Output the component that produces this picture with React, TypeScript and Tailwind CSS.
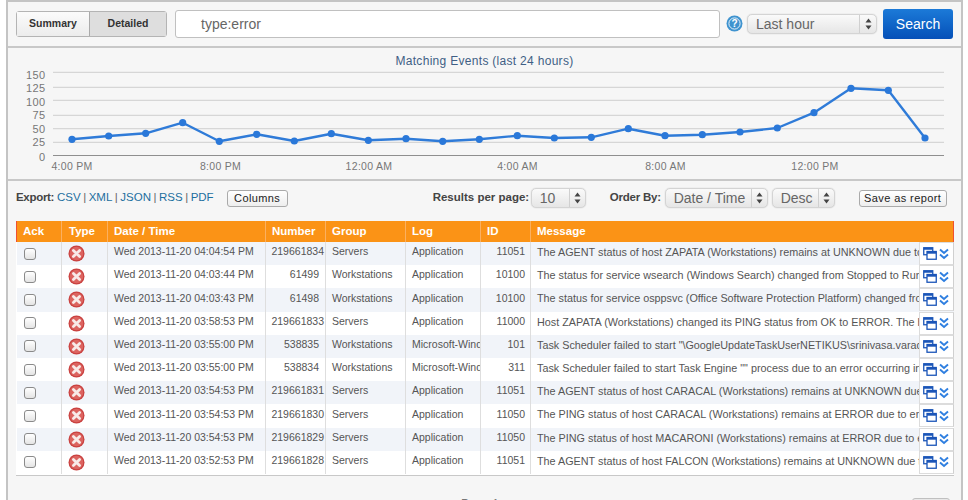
const font = { fontFamily: '"Liberation Sans", Arial, sans-serif' };

const pts: [number, number][] = [
  [72, 139.3], [108.7, 136], [145.7, 133.3], [182.7, 122.7], [219.3, 141.3], [256.7, 134.3],
  [294.3, 141], [331.3, 133.7], [368.3, 140.3], [406, 138.7], [442.7, 141.3], [479.3, 139.3],
  [517.3, 135.7], [554.3, 138], [591.3, 137.3], [628.3, 128.7], [665, 135.7], [702.3, 134.7],
  [740, 132], [777.3, 128], [814, 112.7], [851, 88.3], [888.3, 90.3], [925, 138],
];

const rows = [
  ["Wed 2013-11-20 04:04:54 PM", "219661834", "Servers", "Application", "11051", "The AGENT status of host ZAPATA (Workstations) remains at UNKNOWN due to timeout while waiting"],
  ["Wed 2013-11-20 04:03:44 PM", "61499", "Workstations", "Application", "10100", "The status for service wsearch (Windows Search) changed from Stopped to Running on this host"],
  ["Wed 2013-11-20 04:03:43 PM", "61498", "Workstations", "Application", "10100", "The status for service osppsvc (Office Software Protection Platform) changed from Stopped to Running"],
  ["Wed 2013-11-20 03:58:53 PM", "219661833", "Servers", "Application", "11000", "Host ZAPATA (Workstations) changed its PING status from OK to ERROR. The host did not respond"],
  ["Wed 2013-11-20 03:55:00 PM", "538835", "Workstations", "Microsoft-Windows-TaskScheduler", "101", "Task Scheduler failed to start \"\\GoogleUpdateTaskUserNETIKUS\\srinivasa.varada\" task for user"],
  ["Wed 2013-11-20 03:55:00 PM", "538834", "Workstations", "Microsoft-Windows-TaskScheduler", "311", "Task Scheduler failed to start Task Engine \"\" process due to an error occurring in the service"],
  ["Wed 2013-11-20 03:54:53 PM", "219661831", "Servers", "Application", "11051", "The AGENT status of host CARACAL (Workstations) remains at UNKNOWN due to timeout while waiting"],
  ["Wed 2013-11-20 03:54:53 PM", "219661830", "Servers", "Application", "11050", "The PING status of host CARACAL (Workstations) remains at ERROR due to error while waiting"],
  ["Wed 2013-11-20 03:54:53 PM", "219661829", "Servers", "Application", "11050", "The PING status of host MACARONI (Workstations) remains at ERROR due to error while waiting"],
  ["Wed 2013-11-20 03:52:53 PM", "219661828", "Servers", "Application", "11051", "The AGENT status of host FALCON (Workstations) remains at UNKNOWN due to timeout while waiting"],
];

function Arrows() {
  return (
    <svg width="7" height="12" viewBox="0 0 7 12" className="block">
      <path d="M3.5 0.5 L6.5 4.5 H0.5 Z M3.5 11.5 L0.5 7.5 H6.5 Z" fill="#444" />
    </svg>
  );
}

function Select({ label, w, textW }: { label: string; w: string; textW: string }) {
  return (
    <div className={`${w} h-[20px] flex items-center rounded-[5px] border border-[#d4d4d4] bg-gradient-to-b from-[#fafafa] to-[#e6e6e6] shadow-[0_0_1px_#bbb]`}>
      <div className={`${textW} text-[14px] text-[#666] pl-[8px] leading-none whitespace-nowrap`}>{label}</div>
      <div className="flex-1 self-stretch border-l border-[#d0d0d0] flex items-center justify-center">
        <Arrows />
      </div>
    </div>
  );
}

function ErrorIcon() {
  return (
    <svg width="17" height="17" viewBox="0 0 17 17" className="block">
      <circle cx="8.5" cy="8.5" r="8" fill="#c9403f" />
      <circle cx="8.5" cy="8.5" r="6.8" fill="#dc6460" />
      <path d="M5.4 5.4 L11.6 11.6 M11.6 5.4 L5.4 11.6" stroke="#f8eae8" strokeWidth="2.8" strokeLinecap="round" />
    </svg>
  );
}

function Actions() {
  return (
    <div className="absolute right-0 top-0 w-[35px] h-[23px] bg-white border border-[#dcdcdc] border-r-[#d0d0d0] flex items-center justify-center gap-[2px]">
      <svg width="14" height="13" viewBox="0 0 14 13" className="block">
        <rect x="0.75" y="0.75" width="9" height="7" fill="#fff" stroke="#1a55b8" strokeWidth="1.3" />
        <rect x="0.75" y="0.75" width="9" height="2" fill="#1a55b8" />
        <rect x="4" y="4.5" width="9.25" height="7.75" fill="#fff" stroke="#1a55b8" strokeWidth="1.3" />
        <rect x="4" y="4.5" width="9.25" height="2.2" fill="#1a55b8" />
      </svg>
      <svg width="10" height="12" viewBox="0 0 10 12" className="block">
        <path d="M1 1.5 L5 5 L9 1.5 M1 6.5 L5 10 L9 6.5" fill="none" stroke="#2f7fe0" strokeWidth="1.9" />
      </svg>
    </div>
  );
}

export default function App() {
  return (
    <div style={font} className="w-[968px] h-[500px] overflow-hidden bg-white relative">
      <div className="ml-[6px] w-[957px] h-[520px] border-2 border-[#c4c4c4] border-b-0 bg-[#f6f6f6]">
        {/* toolbar */}
        <div className="h-[46px] flex items-start border-b-2 border-[#c8c8c8]">
          <div className="ml-[8px] mt-[9px] flex w-[151px] h-[26px] rounded-[3px] border border-[#b4b4b4] text-[10.5px] font-bold text-[#333]">
            <div className="w-[73px] flex items-center justify-center bg-gradient-to-b from-[#fbfbfb] to-[#ececec] border-r border-[#aaa]">Summary</div>
            <div className="flex-1 flex items-center justify-center bg-[#dedede]">Detailed</div>
          </div>
          <div className="ml-[8px] mt-[8px] w-[545px] h-[28px] bg-white border border-[#c0c0c0] rounded-[3px] pl-[25px] flex items-center text-[14px] text-[#666]">
            type:error
          </div>
          <div className="ml-[6px] mt-[13px]">
            <svg width="17" height="17" viewBox="0 0 17 17" className="block">
              <circle cx="8.5" cy="8.5" r="8" fill="#3f93cf" />
              <circle cx="8.5" cy="8.5" r="5.6" fill="none" stroke="#e4f1fa" strokeWidth="1" />
              <text x="8.5" y="12" textAnchor="middle" fontSize="10" fontWeight="700" fill="#fff">?</text>
            </svg>
          </div>
          <div className="ml-[4px] mt-[12px]">
            <Select label="Last hour" w="w-[130px]" textW="w-[111px]" />
          </div>
          <div className="ml-[6px] mt-[7px] w-[70px] h-[30px] rounded-[3px] bg-gradient-to-b from-[#1c7ad8] to-[#0650b8] text-white text-[14px] flex items-center justify-center">
            Search
          </div>
        </div>

        {/* chart */}
        <div className="h-[133px] pt-[7px] border-b-2 border-[#c8c8c8]">
          <div className="h-[12px] flex items-center justify-center text-[12px] tracking-[0.3px] text-[#3f5f85] leading-none">
            Matching Events (last 24 hours)
          </div>
          <svg width="953" height="112" viewBox="8 67 953 112" className="block" style={font}>
            {[72.3, 87.3, 100.3, 115.3, 128.7, 142.3].map((y) => (
              <line key={y} x1="53" x2="944" y1={y} y2={y} stroke="#cfcfcf" strokeWidth="1" />
            ))}
            <line x1="53" x2="944" y1="155.5" y2="155.5" stroke="#8f8f8f" strokeWidth="1.2" />
            {[["150", 79], ["125", 92], ["100", 106], ["75", 119], ["50", 133], ["25", 146], ["0", 161]].map(([t, y]) => (
              <text key={t} x="45.5" y={y} textAnchor="end" fontSize="11" letterSpacing="0.4" fill="#777">{t}</text>
            ))}
            {[["4:00 PM", 72], ["8:00 PM", 220.5], ["12:00 AM", 369], ["4:00 AM", 517.5], ["8:00 AM", 665.5], ["12:00 PM", 815]].map(([t, x]) => (
              <text key={t} x={x} y="169.5" textAnchor="middle" fontSize="10.5" letterSpacing="0.3" fill="#777">{t}</text>
            ))}
            <polyline points={pts.map((p) => p.join(",")).join(" ")} fill="none" stroke="#2f7bd8" strokeWidth="2.4" strokeLinejoin="round" />
            {pts.map((p) => (
              <circle key={p[0]} cx={p[0]} cy={p[1]} r="3.6" fill="#2a78d9" />
            ))}
          </svg>
        </div>

        {/* options row */}
        <div className="h-[40px] flex items-center pl-[8px] pb-[6px] text-[11.5px] text-[#333]">
          <span className="font-bold tracking-[-0.3px] w-[39px] text-[#444]">Export:</span>
          <span className="ml-[2px] text-[#1d6f9f]">CSV</span><span className="mx-[2.5px] text-[#666]">|</span>
          <span className="text-[#1d6f9f]">XML</span><span className="mx-[2.5px] text-[#666]">|</span>
          <span className="text-[#1d6f9f]">JSON</span><span className="mx-[2.5px] text-[#666]">|</span>
          <span className="text-[#1d6f9f]">RSS</span><span className="mx-[2.5px] text-[#666]">|</span>
          <span className="text-[#1d6f9f]">PDF</span>
          <div className="ml-[13px] w-[61px] h-[17px] rounded-[3px] border border-[#aaa] bg-gradient-to-b from-white to-[#eee] flex items-center justify-center text-[11px] tracking-[0.4px] text-[#222]">Columns</div>
          <span className="ml-[145px] w-[96px] font-bold text-[#444] whitespace-nowrap">Results per page:</span>
          <div className="ml-[2px]"><Select label="10" w="w-[55px]" textW="w-[37px]" /></div>
          <span className="ml-[24px] w-[52px] tracking-[-0.2px] font-bold text-[#444] whitespace-nowrap">Order By:</span>
          <div className="ml-[3px]"><Select label="Date / Time" w="w-[103px]" textW="w-[85px]" /></div>
          <div className="ml-[4px]"><Select label="Desc" w="w-[63px]" textW="w-[45px]" /></div>
          <div className="ml-[24px] w-[88px] h-[17px] rounded-[3px] border border-[#aaa] bg-gradient-to-b from-white to-[#eee] flex items-center justify-center text-[11px] tracking-[0.4px] text-[#222] whitespace-nowrap">Save as report</div>
        </div>

        {/* table */}
        <div className="ml-[8px] w-[938px] pb-[1px] border-b border-[#c8c8c8] bg-white">
          <table className="w-full table-fixed border-collapse text-[10.5px] text-[#555]">
            <colgroup>
              <col className="w-[45px]" />
              <col className="w-[46px]" />
              <col className="w-[158px]" />
              <col className="w-[60px]" />
              <col className="w-[80px]" />
              <col className="w-[75px]" />
              <col className="w-[50px]" />
              <col />
            </colgroup>
            <thead>
              <tr className="h-[21px] bg-[#fb9316] text-white text-[11.5px] font-bold text-left">
                <th className="pl-[6px] border-l border-l-[#f05030] border-r border-r-[#fbb060] font-bold">Ack</th>
                <th className="pl-[7px] border-r border-r-[#fbb060] font-bold">Type</th>
                <th className="pl-[6px] border-r border-r-[#fbb060] font-bold">Date / Time</th>
                <th className="pl-[6px] border-r border-r-[#fbb060] font-bold">Number</th>
                <th className="pl-[6px] border-r border-r-[#fbb060] font-bold">Group</th>
                <th className="pl-[6px] border-r border-r-[#fbb060] font-bold">Log</th>
                <th className="pl-[6px] border-r border-r-[#fbb060] font-bold">ID</th>
                <th className="pl-[6px] border-r border-r-[#f05030] font-bold">Message</th>
              </tr>
            </thead>
            <tbody>
              {rows.map((r, i) => (
                <tr key={i} className={`h-[23.2px] ${i % 2 === 0 ? "bg-[#f1f4f9]" : "bg-white"}`}>
                  <td className="pl-[7px] border-r border-[#dedede]">
                    <div className="w-[12px] h-[12px] rounded-[3px] border border-[#8a8a8a] bg-gradient-to-b from-white to-[#e4e4e4]" />
                  </td>
                  <td className="pl-[6px] border-r border-[#dedede]"><ErrorIcon /></td>
                  <td className="pl-[6px] pb-[3px] border-r border-[#dedede] whitespace-nowrap overflow-hidden">{r[0]}</td>
                  <td className="pr-[1px] pl-[5px] pb-[3px] text-right border-r border-[#dedede] whitespace-nowrap overflow-hidden">
                    <span className={r[1].length > 6 ? "" : "pr-[5px]"}>{r[1]}</span>
                  </td>
                  <td className="pl-[6px] pb-[3px] border-r border-[#dedede] whitespace-nowrap overflow-hidden">{r[2]}</td>
                  <td className="pl-[6px] pb-[3px] border-r border-[#dedede] whitespace-nowrap overflow-hidden">{r[3]}</td>
                  <td className="pr-[5px] pb-[3px] text-right border-r border-[#dedede] whitespace-nowrap overflow-hidden">{r[4]}</td>
                  <td className="pl-[6px] pb-[3px] text-[10.8px] relative whitespace-nowrap overflow-hidden">
                    {r[5]}
                    <Actions />
                  </td>
                </tr>
              ))}
            </tbody>
          </table>
        </div>

        {/* pagination, cut by the window */}
        <div className="relative pt-[22px] h-[46px] text-[#777]">
          <div className="ml-[453px] text-[12px] leading-none">Page 1</div>
          <div className="absolute left-[904px] top-[22px] w-[38px] h-[20px] rounded-[3px] border border-[#c0c0c0] bg-[#e8e8e8]" />
        </div>
      </div>
    </div>
  );
}
